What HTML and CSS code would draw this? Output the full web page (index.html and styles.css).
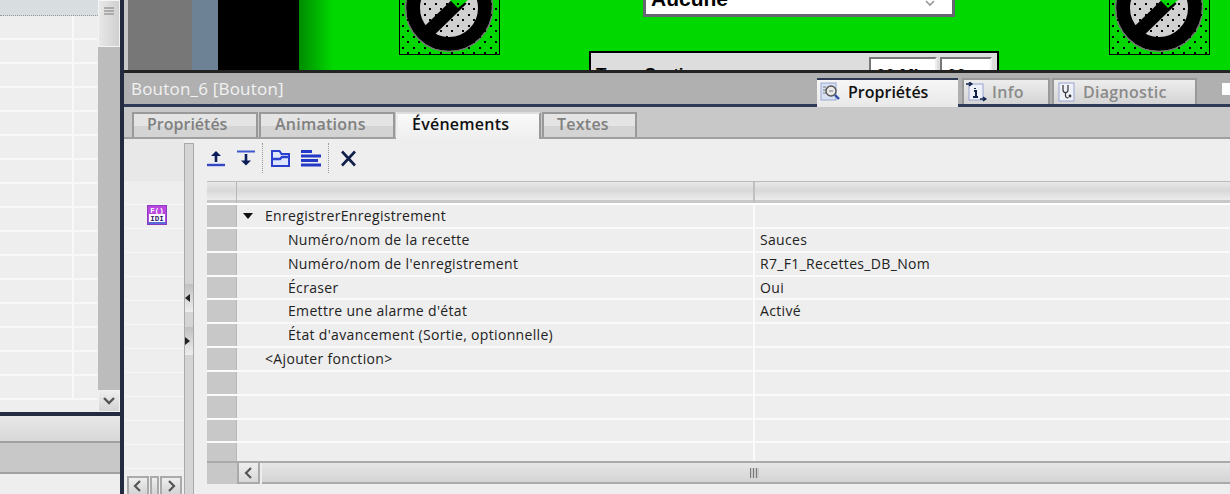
FILE: index.html
```html
<!DOCTYPE html>
<html lang="fr">
<head>
  <meta charset="UTF-8">
  <title>Bouton_6 [Bouton]</title>
  <link rel="stylesheet" href="styles.css">
</head>
<body>
  <div class="ecran">
    <!-- colonne de gauche -->
    <aside class="gauche">
      <div class="liste">
        <div class="liste-table">
          <div class="liste-entete"></div>
          <div class="liste-lignes">
            <div class="lig"></div><div class="lig"></div><div class="lig"></div><div class="lig"></div>
            <div class="lig"></div><div class="lig"></div><div class="lig"></div><div class="lig"></div>
            <div class="lig"></div><div class="lig"></div><div class="lig"></div><div class="lig"></div>
            <div class="lig"></div><div class="lig"></div><div class="lig"></div><div class="lig"></div>
          </div>
        </div>
        <div class="liste-scroll">
          <div class="pouce">
            <svg width="12" height="9" viewBox="0 0 12 9"><path d="M1 1h10M1 4h10M1 7h10" stroke="#7a7a7a" fill="none"/></svg>
          </div>
          <div class="fleche-bas">
            <svg width="14" height="10" viewBox="0 0 14 10"><path d="M2 2l5 5 5-5" stroke="#555" stroke-width="2.4" fill="none"/></svg>
          </div>
        </div>
      </div>
      <div class="bas-degrade"></div>
      <div class="bas-gris"></div>
      <div class="bas-clair"></div>
    </aside>

    <main class="droite">
      <!-- zone de l'ecran HMI -->
      <div class="canevas">
        <div class="bande-grise"></div>
        <div class="bande-bleue"></div>
        <div class="bande-noire"></div>
        <div class="bande-verte">
          <div class="selecteur sel-a">
            <svg width="99" height="54" viewBox="0 0 99 54"><circle cx="49" cy="8" r="36" fill="#d0d0d0" stroke="#000" stroke-width="14"/><circle cx="49" cy="8" r="43.5" fill="none" stroke="#777" stroke-width="1.5"/><path d="M28 32L62 -1" stroke="#000" stroke-width="13"/><path d="M50 0l8 8 10-8z" fill="#00d800"/></svg>
          </div>
          <div class="selecteur sel-b">
            <svg width="99" height="54" viewBox="0 0 99 54"><circle cx="49" cy="8" r="36" fill="#d0d0d0" stroke="#000" stroke-width="14"/><circle cx="49" cy="8" r="43.5" fill="none" stroke="#777" stroke-width="1.5"/><path d="M28 32L62 -1" stroke="#000" stroke-width="13"/><path d="M50 0l8 8 10-8z" fill="#00d800"/></svg>
          </div>
          <div class="combo">
            <span class="combo-txt">Aucune</span>
            <svg class="combo-fl" width="12" height="8" viewBox="0 0 12 8"><path d="M2 1l4 4 4-4" stroke="#999" stroke-width="1.6" fill="none"/></svg>
          </div>
          <div class="temps">
            <span class="temps-lib">Temp Sortie</span>
            <span class="temps-champ champ-1">00 Mi</span>
            <span class="temps-champ champ-2">00</span>
          </div>
        </div>
      </div>

      <!-- barre de titre de l'inspecteur -->
      <div class="barre-titre">
        <span class="titre">Bouton_6 [Bouton]</span>
        <div class="onglets-haut">
          <div class="ong-h actif">
            <svg width="22" height="20" viewBox="0 0 22 20"><rect x="1" y="1" width="15" height="17" fill="#d8e0f4" stroke="#9aa6d0"/><path d="M3 5h3M3 8h3M3 11h3" stroke="#777"/><circle cx="11" cy="9" r="5" fill="#e8e8e8" stroke="#555" stroke-width="1.4"/><path d="M9 9h4" stroke="#777"/><path d="M15 13l4 4" stroke="#2a4ea8" stroke-width="2.4"/></svg>
            <span>Propriétés</span>
          </div>
          <div class="ong-h">
            <svg width="22" height="20" viewBox="0 0 22 20"><rect x="4" y="2" width="14" height="16" fill="#eef0fa" stroke="#9aa6d0"/><path d="M1 2h5M4 0l3 2-3 2" stroke="#10204a" stroke-width="1.3" fill="none"/><path d="M10 6v1M9 9h2v6M8 15h5" stroke="#10204a" stroke-width="2" fill="none"/><path d="M15 17h5M18 15l3 2-3 2" stroke="#10204a" stroke-width="1.3" fill="none"/></svg>
            <span>Info</span>
          </div>
          <div class="ong-h">
            <svg width="18" height="20" viewBox="0 0 18 20"><rect x="1" y="1" width="15" height="18" fill="#eef0fa" stroke="#9aa6d0"/><path d="M5 3v5a2.5 2.5 0 0 0 5 0V3M7.5 11v3a2 2 0 0 0 3 1.5" stroke="#333" stroke-width="1.2" fill="none"/><circle cx="12" cy="14" r="1.4" fill="#333"/></svg>
            <span>Diagnostic</span>
          </div>
        </div>
        <div class="mini-fenetre"></div>
      </div>

      <!-- onglets secondaires -->
      <div class="onglets">
        <div class="ong">Propriétés</div>
        <div class="ong">Animations</div>
        <div class="ong">Événements</div>
        <div class="ong">Textes</div>
      </div>

      <div class="contenu">
        <div class="navigation">
          <div class="nav-lignes">
            <div class="nav-lig"></div>
            <div class="nav-lig"></div>
            <div class="nav-lig nav-icone">
              <svg width="20" height="20" viewBox="0 0 20 20"><rect x="0.5" y="0.5" width="19" height="19" fill="#b848e0" stroke="#8a3cc0"/><rect x="2" y="9" width="16" height="8" fill="#fff"/><rect x="1" y="17" width="18" height="2" fill="#5a68d8"/><text x="10" y="7.5" class="ic-haut">F()</text><text x="10" y="15.5" class="ic-bas">IDI</text></svg>
            </div>
            <div class="nav-lig"></div><div class="nav-lig"></div><div class="nav-lig"></div>
            <div class="nav-lig"></div><div class="nav-lig"></div><div class="nav-lig"></div>
            <div class="nav-lig"></div><div class="nav-lig"></div><div class="nav-lig"></div>
            <div class="nav-lig"></div>
          </div>
          <div class="nav-scroll">
            <div class="btn-sc"><svg width="10" height="12" viewBox="0 0 10 12"><path d="M7 1L2 6l5 5" stroke="#555" stroke-width="2.2" fill="none"/></svg></div>
            <div class="btn-sc etroit"></div>
            <div class="btn-sc"><svg width="10" height="12" viewBox="0 0 10 12"><path d="M3 1l5 5-5 5" stroke="#555" stroke-width="2.2" fill="none"/></svg></div>
          </div>
        </div>
        <div class="separateur">
          <div class="sep-poignee p-1"><i class="tri-g"></i></div>
          <div class="sep-poignee p-2"><i class="tri-d"></i></div>
        </div>

        <div class="editeur">
          <div class="outils">
            <svg class="out" width="18" height="17" viewBox="0 0 18 17"><path d="M9 12V4" stroke="#0c1e5a" stroke-width="2.6"/><path d="M4 6l5-5 5 5z" fill="#0c1e5a"/><path d="M0 15h18" stroke="#3048c8" stroke-width="2.4"/></svg>
            <svg class="out" width="18" height="17" viewBox="0 0 18 17"><path d="M0 1.5h18" stroke="#4058d0" stroke-width="2"/><path d="M9 4v8" stroke="#0c1e5a" stroke-width="2.6"/><path d="M4 10.5l5 5 5-5z" fill="#0c1e5a"/></svg>
            <span class="out-sep"></span>
            <svg class="out out-dossier" width="19" height="17" viewBox="0 0 19 17"><path d="M1 1h7.5l2 3H18v12H1z" fill="#dfe7ff" stroke="#2c40d0" stroke-width="2"/><path d="M1 9h8l2-2h7" stroke="#2c40d0" stroke-width="2.4" fill="none"/></svg>
            <svg class="out out-liste" width="20" height="17" viewBox="0 0 20 17"><path d="M0 1.5h11M0 6h20M0 10.5h17M0 15h20" stroke="#2438c8" stroke-width="3"/></svg>
            <span class="out-sep"></span>
            <svg class="out out-x" width="18" height="17" viewBox="0 0 18 17"><path d="M2 1.5l13 14M15 1.5L2 15.5" stroke="#10204a" stroke-width="2.6"/></svg>
          </div>

          <div class="tableau">
            <div class="ligne entete"><div class="marge"></div><div class="c-nom"></div><div class="c-val"></div></div>
            <div class="ligne"><div class="marge"></div><div class="c-nom n0"><i class="tri-bas"></i>EnregistrerEnregistrement</div><div class="c-val"></div></div>
            <div class="ligne"><div class="marge"></div><div class="c-nom n1">Numéro/nom de la recette</div><div class="c-val">Sauces</div></div>
            <div class="ligne"><div class="marge"></div><div class="c-nom n1">Numéro/nom de l'enregistrement</div><div class="c-val">R7_F1_Recettes_DB_Nom</div></div>
            <div class="ligne"><div class="marge"></div><div class="c-nom n1">Écraser</div><div class="c-val">Oui</div></div>
            <div class="ligne"><div class="marge"></div><div class="c-nom n1">Emettre une alarme d'état</div><div class="c-val">Activé</div></div>
            <div class="ligne"><div class="marge"></div><div class="c-nom n1">État d'avancement (Sortie, optionnelle)</div><div class="c-val"></div></div>
            <div class="ligne"><div class="marge"></div><div class="c-nom n2">&lt;Ajouter fonction&gt;</div><div class="c-val"></div></div>
            <div class="ligne"><div class="marge"></div><div class="c-nom"></div><div class="c-val"></div></div>
            <div class="ligne"><div class="marge"></div><div class="c-nom"></div><div class="c-val"></div></div>
            <div class="ligne"><div class="marge"></div><div class="c-nom"></div><div class="c-val"></div></div>
            <div class="ligne derniere"><div class="marge"></div><div class="c-nom"></div><div class="c-val"></div></div>
            <div class="scroll-h">
              <div class="marge-bas"></div>
              <div class="sh-btn"><svg width="10" height="12" viewBox="0 0 10 12"><path d="M7 1L2 6l5 5" stroke="#555" stroke-width="2.2" fill="none"/></svg></div>
              <div class="sh-piste"><span class="sh-grip"></span></div>
            </div>
          </div>
        </div>
      </div>
    </main>
  </div>
</body>
</html>
```

FILE: styles.css
```css
* {
  box-sizing: border-box;
}

html, body {
  margin: 0;
  padding: 0;
  height: 494px;
  overflow: hidden;
}

body {
  font-family: 'Open Sans', 'Noto Sans', sans-serif;
  font-size: 14px;
  letter-spacing: 0.33px;
  color: #222;
  background-color: #eee;
}

.ecran {
  display: flex;
  width: 1230px;
  height: 494px;
}

/* colonne de gauche */
.gauche {
  width: 120px;
  flex: none;
  display: flex;
  flex-direction: column;
}

.liste {
  height: 412px;
  display: flex;
  flex: none;
}

.liste-table {
  width: 98px;
  background-color: #eee;
}

.liste-entete {
  height: 16px;
  background-color: #d8dde0;
  border-bottom: 1px dotted #999;
}

.lig {
  height: 24px;
  border-bottom: 2px solid #f8f8f8;
  margin-right: 1px;
  background: linear-gradient(to right, transparent 72px, #f8f8f8 72px, #f8f8f8 74px, transparent 74px);
}

.liste-scroll {
  width: 22px;
  background-color: #bcbcbc;
  display: flex;
  flex-direction: column;
  justify-content: space-between;
  align-items: center;
}

.pouce {
  width: 22px;
  height: 47px;
  background: linear-gradient(to right, #e8e8e8, #d0d0d0);
  border: 1px solid #f4f4f4;
  text-align: center;
}

.fleche-bas {
  width: 22px;
  height: 22px;
  background: linear-gradient(#eee, #d4d4d4);
  border: 1px solid #f0f0f0;
  display: flex;
  align-items: center;
  justify-content: center;
}

.bas-degrade {
  height: 31px;
  border-top: 4px solid #232b40;
  background: linear-gradient(#e8e8e8, #d8d8d8);
  border-bottom: 2px solid #a0a0a0;
  flex: none;
}

.bas-gris {
  height: 31px;
  background-color: #c8c8c8;
  border-bottom: 2px solid #a0a0a0;
  flex: none;
}

.bas-clair {
  flex: 1;
  background-color: #eee;
}

/* colonne de droite */
.droite {
  flex: 1;
  min-width: 0;
  border-left: 4px solid #232b40;
  display: flex;
  flex-direction: column;
}

.canevas {
  height: 70px;
  flex: none;
  display: flex;
  padding-left: 4px;
  background-color: #c8c8c8;
}

.bande-grise {
  width: 64px;
  background-color: #777;
}

.bande-bleue {
  width: 26px;
  background-color: #6d8395;
}

.bande-noire {
  width: 81px;
  background-color: #000;
}

.bande-verte {
  flex: 1;
  position: relative;
  overflow: hidden;
  background: linear-gradient(to right, #008c00 0, #00d800 34px);
}

.selecteur {
  position: absolute;
  top: 0;
  width: 101px;
  height: 55px;
  border: 1px solid #000;
  border-top: 0;
  overflow: hidden;
}

.selecteur::after {
  content: "";
  position: absolute;
  inset: 0;
  background-image: linear-gradient(#111, #111), linear-gradient(#111, #111);
  background-image: radial-gradient(circle at 1px 1px, #000 1.1px, transparent 1.2px), radial-gradient(circle at 1px 1px, #000 1.1px, transparent 1.2px);
  background-size: 11px 11px;
  background-position: 2px 3px, 7px 8px;
}

.sel-a {
  left: 100px;
}

.sel-b {
  left: 810px;
}

.combo {
  position: absolute;
  left: 344px;
  top: -12px;
  width: 312px;
  height: 29px;
  background-color: #fff;
  border: 3px solid #666672;
  font-family: 'Liberation Sans', sans-serif;
  font-size: 21px;
  font-weight: bold;
  letter-spacing: 0;
  color: #000;
}

.combo-txt {
  position: absolute;
  left: 5px;
  top: -4px;
}

.combo-fl {
  position: absolute;
  right: 16px;
  top: 9px;
}

.temps {
  position: absolute;
  left: 290px;
  top: 51px;
  width: 410px;
  height: 30px;
  background-color: #ddd;
  border: 2px solid #000;
  font-family: 'Liberation Sans', sans-serif;
  font-size: 17px;
  font-weight: bold;
  letter-spacing: 0;
  color: #000;
}

.temps-lib {
  position: absolute;
  left: 5px;
  top: 12px;
}

.temps-champ {
  position: absolute;
  top: 4px;
  height: 30px;
  padding: 7px 0 0 5px;
  background-color: #fff;
  border: 2px solid #777;
  border-right-color: #eee;
}

.champ-1 {
  left: 278px;
  width: 68px;
}

.champ-2 {
  left: 349px;
  width: 52px;
}

.barre-titre {
  height: 37px;
  flex: none;
  position: relative;
  background-color: #b0b0b0;
  border-top: 3px solid #232323;
  border-bottom: 3px solid #2e3a56;
}

.titre {
  position: absolute;
  left: 7px;
  top: 4px;
  font-size: 17px;
  letter-spacing: 0.2px;
  color: #f2f2f2;
}

.onglets-haut {
  position: absolute;
  left: 693px;
  top: 5px;
  display: flex;
  align-items: flex-start;
  gap: 2px;
}

.ong-h {
  height: 26px;
  padding: 0 0 0 1px;
  display: flex;
  align-items: center;
  gap: 5px;
  font-size: 16px;
  letter-spacing: 0.3px;
  color: #8a8a8a;
  font-weight: 600;
  background: linear-gradient(#ededed, #d4d4d4);
  border: 2px solid #999;
  border-bottom: 0;
}

.ong-h:nth-child(2) {
  width: 88px;
  margin-left: 2px;
}

.ong-h:nth-child(3) {
  width: 145px;
  padding-left: 4px;
  gap: 7px;
}

.ong-h.actif {
  width: 141px;
  height: 29px;
  padding: 0 0 3px 3px;
  gap: 6px;
  letter-spacing: 0;
  color: #111;
  background: linear-gradient(#f6f6f6, #e8e8e8);
  border: 0;
  border-top: 2px solid #2e3a56;
  position: relative;
  z-index: 1;
}

.mini-fenetre {
  position: absolute;
  right: 0;
  top: 10px;
  width: 8px;
  height: 12px;
  background-color: #fff;
}

/* onglets secondaires */
.onglets {
  height: 32px;
  flex: none;
  display: flex;
  gap: 1px;
  padding: 5px 0 0 8px;
  background-color: #c8c8c8;
  border-bottom: 2px solid #a0a0a0;
}

.ong {
  height: 25px;
  padding-left: 14px;
  line-height: 21px;
  font-size: 16px;
  font-weight: 600;
  letter-spacing: 0.25px;
  color: #808080;
  background: linear-gradient(#e4e4e4 50%, #d4d4d4 50%);
  border: 2px solid #999;
  border-bottom: 0;
}

.ong:nth-child(1) {
  width: 126px;
  padding-left: 13px;
  letter-spacing: 0;
}

.ong:nth-child(2) {
  width: 136px;
}

.ong:nth-child(3) {
  width: 145px;
  height: 27px;
  color: #111;
  background: linear-gradient(#fafafa, #eee);
  border-color: #ddd #999 #eee #eee;
}

.ong:nth-child(4) {
  width: 95px;
  padding-left: 13px;
}

.contenu {
  flex: 1;
  min-height: 0;
  display: flex;
  background-color: #eee;
}

.navigation {
  width: 60px;
  flex: none;
  position: relative;
  overflow: hidden;
}

.nav-lig {
  height: 24px;
  border-bottom: 1px solid #f6f6f6;
}

.nav-lig:first-child {
  height: 42px;
  background-color: #e8e8e8;
  border-bottom: 0;
}

.nav-icone {
  display: flex;
  justify-content: center;
  padding-left: 5px;
}

.ic-haut, .ic-bas {
  font-family: 'Liberation Mono', monospace;
  font-size: 7.5px;
  font-weight: bold;
  letter-spacing: 0;
  text-anchor: middle;
}

.ic-haut {
  fill: #fff;
}

.ic-bas {
  fill: #30206a;
}

.nav-scroll {
  position: absolute;
  left: 0;
  bottom: 0;
  display: flex;
  gap: 1px;
  height: 18px;
  padding-left: 3px;
}

.btn-sc {
  width: 22px;
  height: 18px;
  background: linear-gradient(#eee, #d4d4d4);
  border: 2px solid #aaa;
  border-bottom: 0;
  display: flex;
  justify-content: center;
  align-items: center;
}

.btn-sc.etroit {
  width: 9px;
}

.separateur {
  width: 10px;
  flex: none;
  position: relative;
  background-color: #d4d4d4;
  border: 1px solid #aaa;
  border-width: 1px 1px 0;
  margin-top: 4px;
}

.sep-poignee {
  position: absolute;
  left: 0;
  width: 8px;
  height: 28px;
  background: linear-gradient(#c0c0c0, #eee);
  display: flex;
  align-items: center;
}

.p-1 {
  top: 140px;
}

.p-2 {
  top: 183px;
}

.tri-g {
  border: 4px solid transparent;
  border-left: 0;
  border-right: 5px solid #222;
}

.tri-d {
  border: 4px solid transparent;
  border-right: 0;
  border-left: 5px solid #222;
}

.editeur {
  flex: 1;
  min-width: 0;
  padding-left: 13px;
}

.outils {
  height: 42px;
  display: flex;
  align-items: center;
  gap: 12px;
  padding: 0 0 4px 0;
}

.out-dossier {
  margin-left: 1px;
}

.out-liste {
  margin-left: -1px;
}

.out-x {
  margin-left: 4px;
}

.out-sep {
  width: 1px;
  height: 30px;
  border-left: 1px dotted #999;
  margin: 0 -5px;
}

.tableau {
  border-top: 1px solid #bbb;
}

.ligne {
  display: flex;
  height: 23.85px;
  border-bottom: 2px solid #fafafa;
  line-height: 22px;
}

.ligne.derniere {
  height: 18px;
  border-bottom: 0;
}

.marge {
  width: 30px;
  flex: none;
  background-color: #c8c8c8;
  border-right: 1px solid #b8b8b8;
}

.c-nom {
  width: 518px;
  flex: none;
  border-right: 2px solid #fafafa;
  white-space: nowrap;
}

.c-val {
  flex: 1;
  padding-left: 5px;
}

.entete {
  height: 23px;
  border-bottom: 2px solid #fff;
  background: linear-gradient(#e8e8e8, #d8d8d8 40%, #ececec 85%, #c8c8c8 85%);
}

.entete .marge {
  background: transparent;
}

.entete .c-nom {
  border-right-color: #c0c0c0;
}

.n0 {
  padding-left: 6px;
  display: flex;
  align-items: center;
}

.tri-bas {
  border: 5px solid transparent;
  border-bottom: 0;
  border-top: 6px solid #111;
  margin-right: 12px;
}

.n1 {
  padding-left: 51px;
}

.n2 {
  padding-left: 28px;
}

.scroll-h {
  display: flex;
  height: 23px;
  border-top: 2px solid #aaa;
}

.marge-bas {
  width: 30px;
  background-color: #c8c8c8;
}

.sh-btn {
  width: 23px;
  background: linear-gradient(#eee, #d8d8d8);
  border: 2px solid #aaa;
  border-top: 0;
  display: flex;
  align-items: center;
  justify-content: center;
}

.sh-piste {
  flex: 1;
  margin-left: 2px;
  padding-left: 16px;
  background: linear-gradient(#e6e6e6, #d4d4d4);
  border-bottom: 2px solid #aaa;
  display: flex;
  justify-content: center;
  align-items: center;
}

.sh-grip {
  width: 9px;
  height: 10px;
  background: repeating-linear-gradient(to right, #777 0, #777 1px, #ccc 1px, #ccc 3px);
}
```
